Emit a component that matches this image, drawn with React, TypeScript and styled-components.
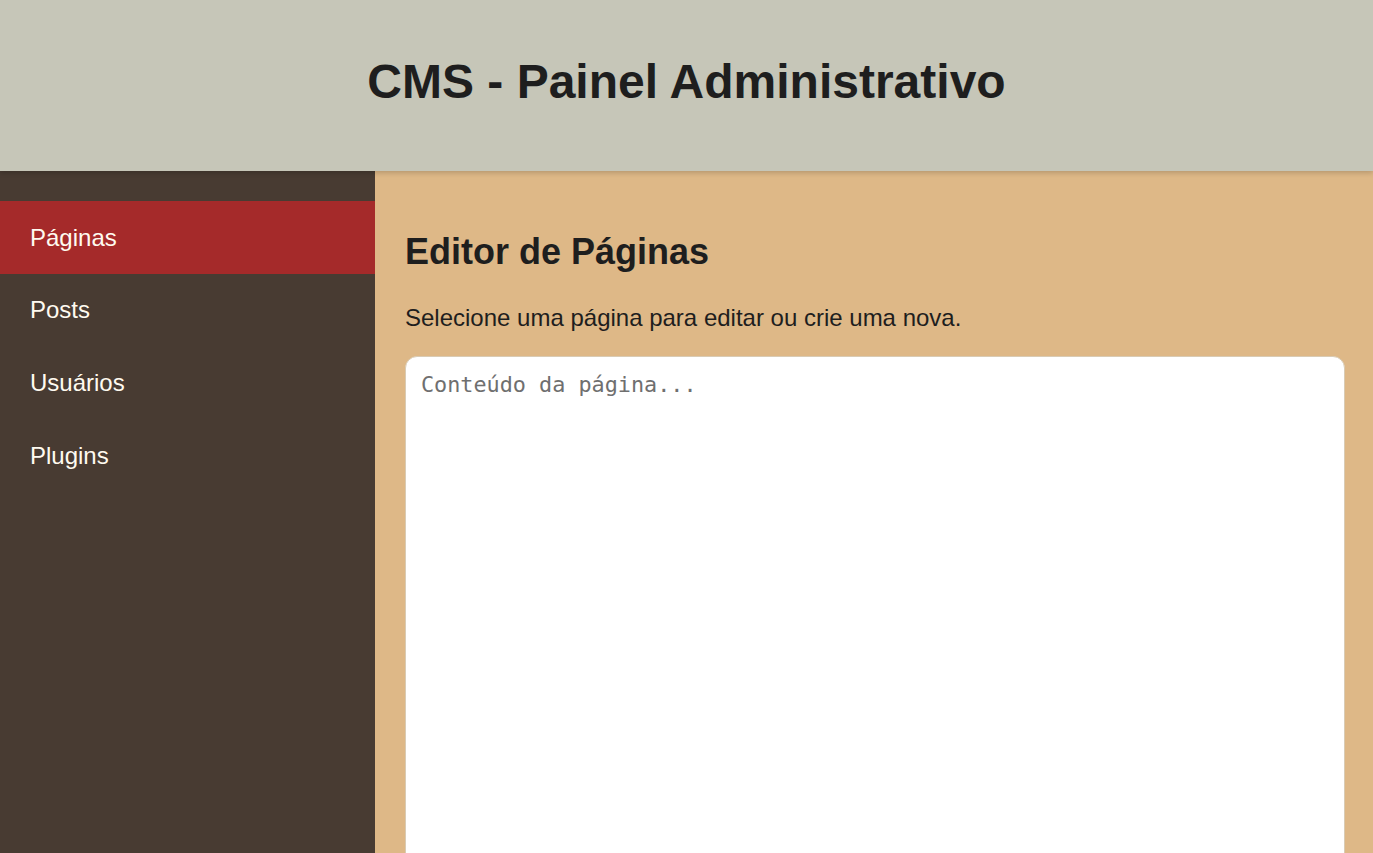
import React from "react";
import styled, { createGlobalStyle } from "styled-components";

const Global = createGlobalStyle`
  html, body { margin: 0; padding: 0; }
  body {
    font-family: "Liberation Sans", Arial, sans-serif;
    font-size: 24px;
    background: #deb887;
    color: #1e1e1e;
  }
  * { box-sizing: border-box; }
`;

const Header = styled.header`
  position: relative;
  z-index: 2;
  height: 171px;
  padding-top: 54px;
  background: #c6c6b8;
  text-align: center;
  box-shadow: 0 2px 5px rgba(0, 0, 0, 0.18);
`;

const Title = styled.h1`
  margin: 0;
  font-size: 48px;
  font-weight: 700;
  color: #1e1e1e;
`;

const Body = styled.div`
  display: flex;
  min-height: 682px;
`;

const Sidebar = styled.nav`
  flex: 0 0 375px;
  background: #483b32;
  padding-top: 30px;
`;

const NavItem = styled.div<{ $active?: boolean }>`
  padding: 22.6px 30px;
  font-size: 24px;
  line-height: 27.6px;
  color: #fffaf0;
  background: ${(p) => (p.$active ? "#a52a2a" : "transparent")};
`;

const Main = styled.main`
  flex: 1;
  padding: 30px;
  background: #deb887;
`;

const Heading = styled.h2`
  margin: 30px 0;
  font-size: 36px;
  line-height: 41.4px;
  font-weight: 700;
`;

const Lead = styled.p`
  margin: 0 0 24px;
  font-size: 24px;
  line-height: 27.6px;
  padding-top: 2px;
`;

const Editor = styled.textarea`
  display: block;
  width: 940px;
  height: 620px;
  padding: 15px;
  border: 1px solid #d9cbb4;
  border-radius: 12px;
  background: #fff;
  font-family: "DejaVu Sans Mono", "Liberation Mono", monospace;
  font-size: 21.8px;
  resize: none;
  outline: none;
  &::placeholder { color: #6f6f6f; }
`;

export default function App() {
  const items = ["Páginas", "Posts", "Usuários", "Plugins"];
  return (
    <>
      <Global />
      <Header>
        <Title>CMS - Painel Administrativo</Title>
      </Header>
      <Body>
        <Sidebar>
          {items.map((it, i) => (
            <NavItem key={it} $active={i === 0}>
              {it}
            </NavItem>
          ))}
        </Sidebar>
        <Main>
          <Heading>Editor de Páginas</Heading>
          <Lead>Selecione uma página para editar ou crie uma nova.</Lead>
          <Editor placeholder="Conteúdo da página..." />
        </Main>
      </Body>
    </>
  );
}
